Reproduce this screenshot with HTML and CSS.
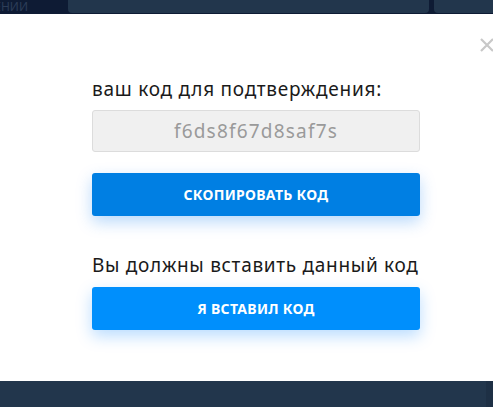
FILE: index.html
```html
<!DOCTYPE html>
<html lang="ru">
<head>
<meta charset="utf-8">
<link rel="stylesheet" href="styles.css">
</head>
<body>
<div class="topbar">
  <div class="tb-left"><span class="tb-text">ЕНИИ</span></div>
  <div class="tb-mid"></div>
  <div class="tb-right"></div>
</div>
<div class="modal">
  <svg class="close" width="14" height="14" viewBox="0 0 14 14"><path d="M1 1L13 13M13 1L1 13" stroke="#c8c8c8" stroke-width="2.2" fill="none"/></svg>
  <div class="content">
    <div class="label">ваш код для подтверждения:</div>
    <div class="code">f6ds8f67d8saf7s</div>
    <button class="btn btn-copy">СКОПИРОВАТЬ КОД</button>
    <div class="label label-2">Вы должны вставить данный код</div>
    <button class="btn btn-done">Я ВСТАВИЛ КОД</button>
  </div>
</div>
<div class="bottombar"><div class="bb-main"></div><div class="bb-edge"></div></div>
</body>
</html>
```
FILE: styles.css
```css
* { box-sizing: border-box; }
html, body { margin: 0; padding: 0; }
body {
  width: 493px;
  height: 407px;
  overflow: hidden;
  background: #ffffff;
  font-family: "Noto Sans", "DejaVu Sans", sans-serif;
}
.topbar {
  display: flex;
  height: 14px;
  background: #0e1b34;
  gap: 5px;
}
.tb-left {
  width: 63px;
  height: 13px;
  overflow: hidden;
  display: flex;
  justify-content: flex-end;
  align-items: flex-end;
}
.tb-text {
  color: #2c3d58;
  font-size: 12px;
  line-height: 12px;
  white-space: nowrap;
  margin-right: 35px;
  margin-bottom: 0;
}
.tb-mid {
  width: 361px;
  height: 13px;
  background: #22364c;
  border-radius: 0 0 4px 4px;
}
.tb-right {
  flex: 1;
  height: 13px;
  background: #22364c;
  border-radius: 0 0 0 4px;
}
.modal {
  position: relative;
  height: 367px;
  background: #ffffff;
}
.close {
  position: absolute;
  left: 480px;
  top: 24px;
}
.content {
  width: 328px;
  margin-left: 92px;
  padding-top: 64px;
  display: flex;
  flex-direction: column;
}
.label {
  font-size: 19px;
  letter-spacing: 0.75px;
  line-height: 22px;
  color: #1a1a1a;
  height: 32px;
  white-space: nowrap;
}
.label-2 {
  letter-spacing: 0.7px;
  margin-top: 36px;
  height: 35px;
  line-height: 26px;
}
.code {
  height: 42px;
  border: 1px solid #dcdcdc;
  border-radius: 3px;
  background: #f0f0f0;
  color: #9a9a9a;
  font-size: 19px;
  letter-spacing: 1.2px;
  line-height: 40px;
  text-align: center;
}
.btn {
  display: block;
  width: 100%;
  height: 43px;
  border: none;
  border-radius: 3px;
  color: #ffffff;
  font-family: "Noto Sans", "DejaVu Sans", sans-serif;
  font-weight: 700;
  font-size: 14px;
  letter-spacing: 0.3px;
  padding: 0;
}
.btn-copy {
  margin-top: 21px;
  background: #007fe3;
  box-shadow: 0 6px 16px rgba(0, 120, 240, 0.28);
}
.btn-done {
  background: #008ffc;
  box-shadow: 0 6px 16px rgba(0, 130, 255, 0.28);
}
.bottombar {
  display: flex;
  height: 26px;
}
.bb-main {
  width: 486px;
  background: #22364c;
}
.bb-edge {
  flex: 1;
  background: #1e3045;
}
```
